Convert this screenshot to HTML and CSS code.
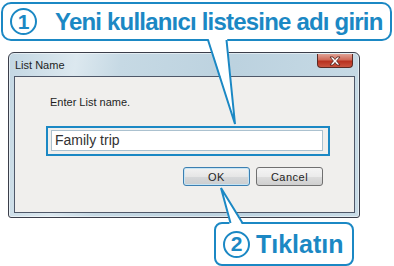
FILE: index.html
```html
<!DOCTYPE html>
<html lang="tr">
<head>
    <meta charset="UTF-8">
    <meta name="viewport" content="width=device-width, initial-scale=1.0">
    <title>List Name</title>
    <link rel="stylesheet" href="styles.css">
</head>
<body>
    <div class="scene">
        <div class="callout callout-top">
            <span class="step">1</span>
            <span class="label">Yeni kullanıcı listesine adı girin</span>
        </div>

        <div class="window">
            <div class="titlebar">
                <span class="title">List Name</span>
                <span class="close">
                    <svg width="14" height="10" viewBox="0 0 14 10">
                        <path d="M2 1 L5 1 L7 3.5 L9 1 L12 1 L8.6 5 L12 9 L9 9 L7 6.5 L5 9 L2 9 L5.4 5 Z" fill="#fff" stroke="#4a1a14" stroke-width="0.8" stroke-linejoin="round"/>
                    </svg>
                </span>
            </div>
            <div class="client">
                <p class="prompt">Enter List name.</p>
                <div class="field">
                    <div class="input">Family trip</div>
                </div>
                <div class="buttons">
                    <button class="btn btn-default">OK</button>
                    <button class="btn">Cancel</button>
                </div>
            </div>
        </div>

        <div class="callout callout-bottom">
            <span class="step">2</span>
            <span class="label">Tıklatın</span>
        </div>

        <!-- pointers of the two callouts, drawn over the dialog -->
        <svg class="tails" width="394" height="266" viewBox="0 0 394 266">
            <polygon points="208,37 227,37 235,124" fill="#fff"/>
            <polyline points="208,40 235,124 226.5,40" fill="none" stroke="#1b88c4" stroke-width="2" stroke-linejoin="miter"/>
            <polygon points="230,226 243,226 221,188" fill="#fff"/>
            <polyline points="230.5,223 221,188 242.5,223" fill="none" stroke="#1b88c4" stroke-width="2" stroke-linejoin="miter"/>
        </svg>
    </div>
</body>
</html>
```

FILE: styles.css
```css
/* page */
body {
    margin: 0;
    background-color: #fff;
    font-family: 'Liberation Sans', Arial, sans-serif;
}

.scene {
    position: relative;
    width: 394px;
    height: 266px;
    padding-top: 2px;
    box-sizing: border-box;
    overflow: hidden;
}

/* callouts */
.callout {
    display: flex;
    align-items: center;
    box-sizing: border-box;
    background-color: #fff;
    border: 2px solid #1b88c4;
    color: #1b88c4;
    font-weight: bold;
}

.callout-top {
    width: 391px;
    height: 39px;
    margin-left: 1px;
    padding-left: 7px;
    gap: 18px;
    border-radius: 10px;
}

.callout-top .label {
    font-size: 24px;
    letter-spacing: -0.8px;
}

.callout-bottom {
    width: 140px;
    height: 44px;
    margin: 4px 0 0 214px;
    padding-left: 7px;
    gap: 6px;
    border-radius: 8px;
}

.callout-bottom .label {
    font-size: 25px;
}

.step {
    display: flex;
    align-items: center;
    justify-content: center;
    width: 27px;
    height: 27px;
    box-sizing: border-box;
    border: 2px solid #1b88c4;
    border-radius: 50%;
    font-size: 21px;
    font-weight: bold;
}

/* dialog window */
.window {
    width: 352px;
    height: 166px;
    margin: 11px 0 0 8px;
    box-sizing: border-box;
    padding: 0 4px 4px 5px;
    border: 1px solid #3b3e4a;
    border-radius: 6px 6px 3px 3px;
    background: linear-gradient(100deg, #c3d7e3 0%, #dce8ef 18%, #c6d9e4 30%, #bcd2df 60%, #c8dbe6 100%);
    box-shadow: inset 0 0 0 1px rgba(255, 255, 255, 0.5);
}

.titlebar {
    display: flex;
    justify-content: space-between;
    align-items: flex-start;
    height: 23px;
}

.title {
    margin: 6px 0 0 1px;
    font-size: 11px;
    color: #1e1e1e;
}

.close {
    display: flex;
    align-items: center;
    justify-content: center;
    width: 36px;
    height: 14px;
    margin: 1px 2px 0 0;
    border: 1px solid #5b2a24;
    border-top: none;
    border-radius: 0 0 4px 4px;
    background: linear-gradient(180deg, #e0a195 0%, #d06a58 45%, #b8301e 55%, #c9533e 100%);
    box-sizing: border-box;
}

.client {
    height: 137px;
    box-sizing: border-box;
    border: 1px solid #4f5869;
    background-color: #f0efed;
    font-size: 11px;
    color: #1e1e1e;
}

.prompt {
    margin: 18px 0 0 35px;
    line-height: 14px;
}

.field {
    width: 284px;
    margin: 17px 0 0 31px;
    box-sizing: border-box;
    padding: 2px 5px 3px 3px;
    border: 2px solid #1b88c4;
}

.input {
    height: 21px;
    box-sizing: border-box;
    padding-left: 3px;
    border: 1px solid #abc1cf;
    background-color: #fff;
    font-size: 14px;
    line-height: 19px;
    color: #333;
}

.buttons {
    display: flex;
    justify-content: flex-end;
    gap: 6px;
    margin-top: 11px;
    padding-right: 31px;
}

.btn {
    width: 67px;
    height: 19px;
    padding: 0;
    border: 1px solid #707070;
    border-radius: 3px;
    background: linear-gradient(180deg, #f4f4f4 0%, #ebebeb 50%, #dddddd 51%, #cfcfcf 100%);
    font-family: 'Liberation Sans', Arial, sans-serif;
    font-size: 11px;
    color: #1e1e1e;
    letter-spacing: 0.5px;
}

.btn-default {
    border-color: #3c7fb1;
    box-shadow: inset 0 0 0 1px #c6e4f4;
    background: linear-gradient(180deg, #eaf6fd 0%, #d9f0fc 50%, #bee6fd 51%, #a7d9f5 100%);
    background: linear-gradient(180deg, #f2f2f2 0%, #e6e6e6 50%, #d6d8da 51%, #cbcdcf 100%);
}

/* overlay with the callout pointers */
.tails {
    position: absolute;
    top: 0;
    left: 0;
    pointer-events: none;
}
```
